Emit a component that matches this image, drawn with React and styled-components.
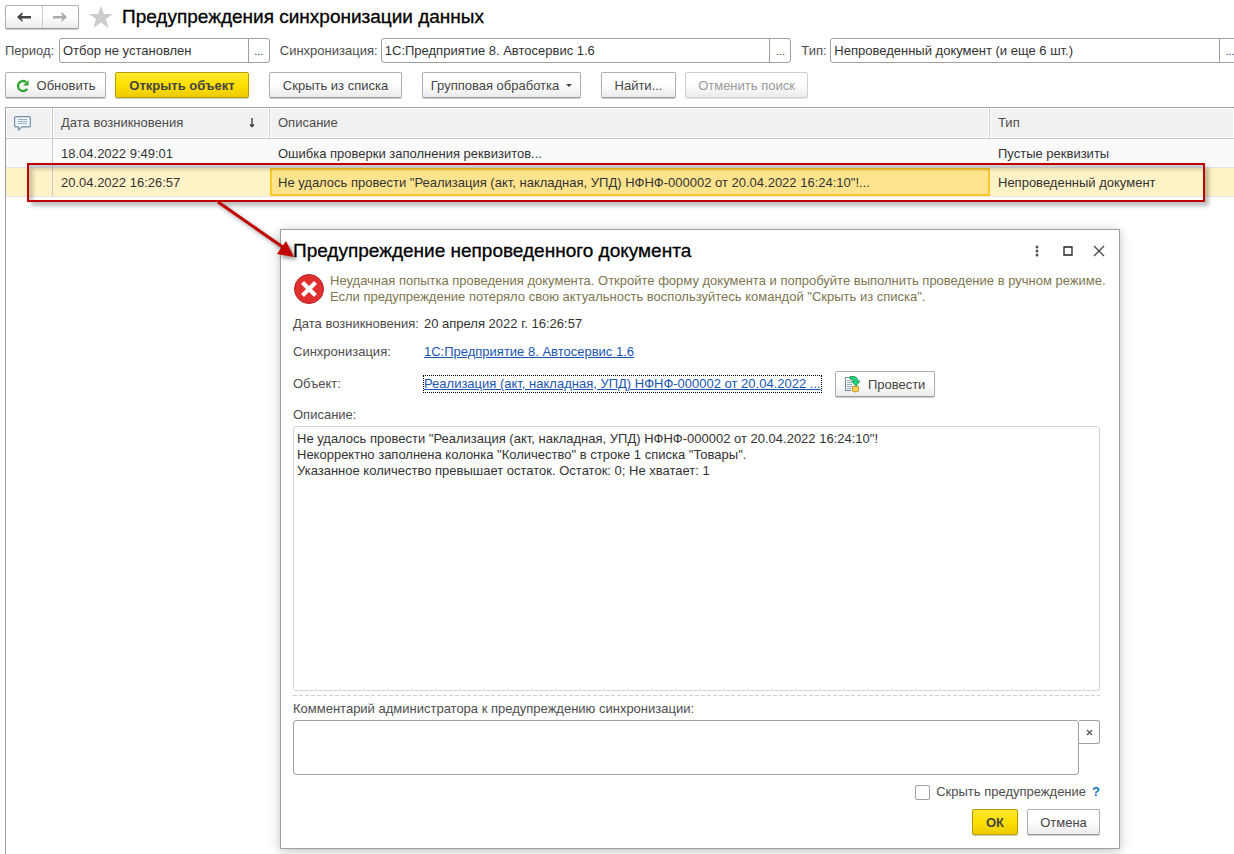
import React from 'react';
import styled, {createGlobalStyle, css} from 'styled-components';

const colors = {
	text: '#333333',
	label: '#4d4d4d',
	border: '#a0a0a0',
	line: '#cccccc',
	link: '#1a56b0',
	mark: '#c00000',
};

const GlobalStyle = createGlobalStyle`
	* {
		box-sizing: border-box;
	}

	html, body {
		height: 100%;
		margin: 0;
		overflow: hidden;
		background: #ffffff;
	}

	#root {
		height: 100%;
	}

	body, button, input, textarea {
		font-family: "Liberation Sans", Arial, sans-serif;
		font-size: 13px;
		line-height: 16px;
		color: ${colors.text};
	}
`;

const Page = styled.main`
	position: relative;
	display: flex;
	flex-direction: column;
	min-height: 100%;
	padding: 4px 0 0 5px;
	overflow: hidden;
`;

const TitleBar = styled.header`
	display: flex;
	align-items: center;
	height: 25px;
`;

const Title = styled.h1`
	margin: 0;
	font-size: 19px;
	line-height: 24px;
	font-weight: normal;
	color: #000000;
	-webkit-text-stroke: 0.3px #000000;
`;

const raised = css`
	border: 1px solid #b0b0b0;
	border-bottom-color: #989898;
	border-radius: 2px;
	background: linear-gradient(#ffffff 45%, #ebebeb);
	box-shadow: 0 1px 1px rgba(0, 0, 0, 0.2);
`;

const History = styled.nav`
	${raised}
	display: flex;
	width: 74px;
	height: 24px;
	margin-right: 10px;

	button {
		flex: 1;
		display: grid;
		place-items: center;
		padding: 0;
		border: 0;
		background: none;
	}

	button + button {
		border-left: 1px solid ${colors.line};
	}
`;

const Star = styled.svg`
	margin-right: 9px;
`;

const Filters = styled.div`
	display: grid;
	grid-template-columns: 265fr 512fr 440fr;
	gap: 10px;
	margin: 9px -7px 9px 0;
`;

const Filter = styled.div`
	display: grid;
	grid-template-columns: ${(props) => props.$label}px 1fr;
	align-items: center;

	label {
		color: ${colors.label};
		white-space: nowrap;
	}
`;

const Picker = styled.div`
	display: flex;
	height: 25px;
	border: 1px solid ${colors.border};
	border-radius: 3px;
	background: #ffffff;

	input {
		flex: 1;
		min-width: 0;
		padding: 0 3px;
		border: 0;
		background: none;
		outline: 0;
	}

	button {
		width: 21px;
		padding: 0;
		border: 0;
		border-left: 1px solid ${colors.border};
		background: none;
		font-size: 11px;
	}
`;

const Toolbar = styled.div`
	display: flex;
	gap: ${(props) => props.$gap}px;
`;

const Button = styled.button`
	${raised}
	display: flex;
	align-items: center;
	justify-content: center;
	gap: 7px;
	min-width: ${(props) => props.$width}px;
	height: 26px;
	padding: 1px 0 0;
	color: #444444;
	white-space: nowrap;

	&:disabled {
		border-color: #cfcfcf;
		color: #999999;
		box-shadow: 0 1px 1px rgba(0, 0, 0, 0.1);
	}

	${(props) => props.$primary && css`
		border-color: #b39b00;
		background: linear-gradient(#ffe633, #ffe000 50%, #eccb00);
		font-weight: bold;
	`}
`;

const List = styled.section`
	flex: 1;
	margin-top: 9px;
	border-left: 1px solid ${colors.border};
`;

const Table = styled.table`
	width: 100%;
	border-top: 1px solid ${colors.border};
	border-collapse: separate;
	border-spacing: 0;
	table-layout: fixed;

	th, td {
		height: 29px;
		padding: 2px 8px 0;
		border-bottom: 1px solid #e4e4e4;
		text-align: left;
		font-weight: normal;
		white-space: nowrap;
		overflow: hidden;
	}

	th {
		height: 31px;
		padding-top: 0;
		border-right: 1px solid ${colors.line};
		border-bottom-color: ${colors.line};
		background: #f1f1f1;
		box-shadow: inset 0 0 0 1px #ffffff;
		color: ${colors.label};
	}

	th:last-child {
		border-right: 0;
	}

	td:first-child {
		border-right: 1px solid ${colors.line};
	}

	svg {
		display: block;
	}
`;

const Row = styled.tr`
	td {
		background: ${(props) => props.$selected ? '#fff2c6' : '#fafafa'};
	}

	td:nth-child(3) {
		${(props) => props.$selected && css`
			background: #ffe48d;
			box-shadow: inset 0 0 0 2px #fac926;
		`}
	}
`;

const SortHead = styled.span`
	display: flex;
	align-items: center;
	justify-content: space-between;
	padding-right: 5px;
`;

const Highlight = styled.div`
	position: absolute;
	top: 163px;
	left: 27px;
	right: 29px;
	height: 39px;
	border: 2px solid ${colors.mark};
	box-shadow: 4px 4px 4px rgba(0, 0, 0, 0.25), inset 4px 4px 4px rgba(0, 0, 0, 0.2);
	pointer-events: none;
`;

const Pointer = styled.svg`
	position: absolute;
	top: 200px;
	left: 216px;
	filter: drop-shadow(3px 3px 2px rgba(0, 0, 0, 0.4));
	pointer-events: none;
`;

const Dialog = styled.section`
	position: absolute;
	top: 229px;
	left: 280px;
	right: 114px;
	padding: 8px 19px 13px 12px;
	border: 1px solid ${colors.border};
	background: #ffffff;
	box-shadow: 0 2px 10px rgba(0, 0, 0, 0.25);
`;

const DialogHead = styled.header`
	display: flex;
	align-items: center;
	justify-content: space-between;
	height: 26px;
`;

const WindowTools = styled.div`
	display: flex;
	gap: 15px;
	margin-right: -7px;

	button {
		display: grid;
		place-items: center;
		width: 16px;
		height: 16px;
		padding: 0;
		border: 0;
		background: none;
	}
`;

const Notice = styled.div`
	display: flex;
	gap: 5px;
	margin-top: 9px;
	color: #7d7650;
	white-space: nowrap;

	svg {
		flex: none;
	}

	p {
		margin: 0;
	}
`;

const Details = styled.dl`
	display: grid;
	grid-template-columns: 131px 1fr;
	grid-template-rows: 28px 28px 36px;
	align-items: center;
	margin: 5px 0 0;

	dt {
		color: ${colors.label};
		white-space: nowrap;
	}

	dd {
		display: flex;
		align-items: center;
		gap: 14px;
		margin: 0;
	}
`;

const Link = styled.a`
	color: ${colors.link};
	text-decoration: underline;
	outline: ${(props) => props.$focused ? '1px dotted #000000' : 'none'};
	white-space: nowrap;
`;

const FieldLabel = styled.label`
	display: block;
	margin: ${(props) => props.$top}px 0 3px;
	color: ${colors.label};
`;

const TextArea = styled.textarea`
	display: block;
	width: 100%;
	height: ${(props) => props.$height}px;
	padding: 4px 3px;
	border: 1px solid ${(props) => props.readOnly ? '#d4d4d4' : colors.border};
	border-radius: 3px;
	outline: 0;
	resize: none;
`;

const Divider = styled.hr`
	height: 1px;
	margin: 4px 0 0;
	border: 0;
	background: repeating-linear-gradient(to right, #d0d0d0 0 4px, transparent 4px 6px);
`;

const Comment = styled.div`
	display: flex;
	align-items: flex-start;

	button {
		flex: none;
		display: grid;
		place-items: center;
		width: 21px;
		height: 24px;
		padding: 0;
		border: 1px solid ${colors.border};
		border-left: 0;
		border-radius: 0 3px 3px 0;
		background: #ffffff;
	}
`;

const HideRow = styled.div`
	display: flex;
	align-items: center;
	justify-content: flex-end;
	gap: 6px;
	margin: 9px 0;

	input {
		appearance: none;
		width: 15px;
		height: 15px;
		margin: 0;
		border: 1px solid ${colors.border};
		border-radius: 2px;
		background: #ffffff;
	}

	label {
		color: ${colors.label};
	}

	a {
		color: #0a76c4;
		font-weight: bold;
		text-decoration: none;
	}
`;

const Actions = styled.footer`
	display: flex;
	justify-content: flex-end;
	gap: 9px;
`;

const Arrow = ({color, flip}) => (
	<svg width="16" height="12" viewBox="0 0 16 12">
		<path
			d="M1 6L6.500 1V3.500L5 5H15V7.400H5L6.500 8.800V11z"
			fill={color}
			transform={flip ? 'translate(16 0) scale(-1 1)' : undefined}
		/>
	</svg>
);

const RefreshIcon = () => (
	<svg width="14" height="14" viewBox="0 0 14 14">
		<path d="M11.200 9.800A5 5 0 1 1 10 3" fill="none" stroke="#2ca52c" strokeWidth="2.300" />
		<path d="M12.500 1V6.500H7z" fill="#2ca52c" />
	</svg>
);

const CommentIcon = () => (
	<svg width="17" height="15" viewBox="0 0 17 15">
		<path d="M1.500 0.600H15.500L16.400 1.500V10L15.500 10.900H8L4.500 14V10.900H1.500L0.600 10V1.500z" fill="#edf4fa" stroke="#7890a8" strokeWidth="1.200" />
		<path d="M4 3.500H13M4 5.500H13M4 7.500H13" stroke="#9aafc2" />
	</svg>
);

const ErrorIcon = () => (
	<svg width="32" height="32" viewBox="0 0 32 32">
		<circle cx="16" cy="16" r="14.500" fill="#df2f2f" stroke="#b52222" />
		<path d="M11 11L21 21M21 11L11 21" stroke="#ffffff" strokeWidth="4.200" strokeLinecap="square" />
	</svg>
);

const PostIcon = () => (
	<svg width="17" height="17" viewBox="0 0 17 17">
		<path d="M1 1.500H9M1.500 1V14M1 14.500H7" stroke="#7a8da0" />
		<path d="M3 4.500H7M3 6.500H8M3 8.500H8M3 10.500H8M3 12.500H7" stroke="#9aabba" />
		<path d="M6 0.500H9Q13.500 0.500 13.500 5H16L12 10L7.500 5H10Q10 3 6 3z" fill="#1fd67a" stroke="#0b8a48" strokeWidth="0.800" />
		<path d="M8.500 10.500V15Q11.500 17 14.500 15V10.500z" fill="#f0c030" stroke="#d09a20" />
		<path d="M9 12H14M9 14H14" stroke="#fbe38a" />
	</svg>
);

const filters = [
	{id: 'period', label: 'Период:', value: 'Отбор не установлен', width: 54},
	{id: 'sync', label: 'Синхронизация:', value: '1С:Предприятие 8. Автосервис 1.6', width: 101},
	{id: 'type', label: 'Тип:', value: 'Непроведенный документ (и еще 6 шт.)', width: 29},
];

const rows = [
	{date: '18.04.2022 9:49:01', text: 'Ошибка проверки заполнения реквизитов...', type: 'Пустые реквизиты'},
	{
		date: '20.04.2022 16:26:57',
		text: 'Не удалось провести "Реализация (акт, накладная, УПД) НФНФ-000002 от 20.04.2022 16:24:10"!...',
		type: 'Непроведенный документ',
		selected: true,
	},
];

const description = `Не удалось провести "Реализация (акт, накладная, УПД) НФНФ-000002 от 20.04.2022 16:24:10"!
Некорректно заполнена колонка "Количество" в строке 1 списка "Товары".
Указанное количество превышает остаток. Остаток: 0; Не хватает: 1`;

function WarningList() {
	return (
		<List>
			<Table>
				<colgroup>
					<col width="47" />
					<col width="217" />
					<col width="720" />
					<col />
				</colgroup>
				<thead>
					<tr>
						<th aria-label="Комментарий"><CommentIcon /></th>
						<th>
							<SortHead>
								Дата возникновения
								<svg width="8" height="12" viewBox="0 0 8 12">
									<path d="M4 1V9.500M2 7.500L4 9.500L6 7.500" fill="none" stroke="#333333" strokeWidth="1.300" />
								</svg>
							</SortHead>
						</th>
						<th>Описание</th>
						<th>Тип</th>
					</tr>
				</thead>
				<tbody>
					{rows.map((row) => (
						<Row key={row.date} $selected={row.selected}>
							<td />
							<td>{row.date}</td>
							<td>{row.text}</td>
							<td>{row.type}</td>
						</Row>
					))}
				</tbody>
			</Table>
		</List>
	);
}

function WarningDialog() {
	return (
		<Dialog role="dialog" aria-labelledby="dialog-title">
			<DialogHead>
				<Title as="h2" id="dialog-title">Предупреждение непроведенного документа</Title>
				<WindowTools>
					<button type="button" aria-label="Еще">
						<svg width="4" height="12" viewBox="0 0 4 12" fill="#555555">
							<circle cx="2" cy="2" r="1.500" />
							<circle cx="2" cy="6" r="1.500" />
							<circle cx="2" cy="10" r="1.500" />
						</svg>
					</button>
					<button type="button" aria-label="Развернуть">
						<svg width="10" height="10" viewBox="0 0 10 10">
							<path d="M1 1H9V9H1z" fill="none" stroke="#222222" strokeWidth="1.300" />
						</svg>
					</button>
					<button type="button" aria-label="Закрыть">
						<svg width="12" height="12" viewBox="0 0 12 12">
							<path d="M1 1L11 11M11 1L1 11" stroke="#444444" strokeWidth="1.300" />
						</svg>
					</button>
				</WindowTools>
			</DialogHead>
			<Notice>
				<ErrorIcon />
				<p>
					Неудачная попытка проведения документа. Откройте форму документа и попробуйте выполнить проведение в ручном режиме.
					<br />
					Если предупреждение потеряло свою актуальность воспользуйтесь командой "Скрыть из списка".
				</p>
			</Notice>
			<Details>
				<dt>Дата возникновения:</dt>
				<dd>20 апреля 2022 г. 16:26:57</dd>
				<dt>Синхронизация:</dt>
				<dd><Link href="#sync">1С:Предприятие 8. Автосервис 1.6</Link></dd>
				<dt>Объект:</dt>
				<dd>
					<Link href="#object" $focused>Реализация (акт, накладная, УПД) НФНФ-000002 от 20.04.2022 ...</Link>
					<Button type="button" $width={100}><PostIcon />Провести</Button>
				</dd>
			</Details>
			<FieldLabel htmlFor="description" $top={5}>Описание:</FieldLabel>
			<TextArea id="description" $height={265} defaultValue={description} readOnly />
			<Divider />
			<FieldLabel htmlFor="comment" $top={5}>Комментарий администратора к предупреждению синхронизации:</FieldLabel>
			<Comment>
				<TextArea id="comment" $height={55} />
				<button type="button" aria-label="Очистить">
					<svg width="7" height="7" viewBox="0 0 7 7">
						<path d="M1 1L6 6M6 1L1 6" stroke="#555555" strokeWidth="1.200" />
					</svg>
				</button>
			</Comment>
			<HideRow>
				<input type="checkbox" id="hide" />
				<label htmlFor="hide">Скрыть предупреждение</label>
				<a href="#help">?</a>
			</HideRow>
			<Actions>
				<Button type="button" $width={46} $primary>ОК</Button>
				<Button type="button" $width={73}>Отмена</Button>
			</Actions>
		</Dialog>
	);
}

function App() {
	return (
		<Page>
			<GlobalStyle />
			<TitleBar>
				<History>
					<button type="button" aria-label="Назад"><Arrow color="#444444" /></button>
					<button type="button" aria-label="Вперед"><Arrow color="#aaaaaa" flip /></button>
				</History>
				<Star width="24" height="22" viewBox="0 0 24 22">
					<path d="M12 0L15 8H24L17 13L19.500 22L12 16.500L4.500 22L7 13L0 8H9z" fill="#cccccc" />
				</Star>
				<Title>Предупреждения синхронизации данных</Title>
			</TitleBar>
			<Filters>
				{filters.map((filter) => (
					<Filter key={filter.id} $label={filter.width}>
						<label htmlFor={filter.id}>{filter.label}</label>
						<Picker>
							<input id={filter.id} defaultValue={filter.value} />
							<button type="button">...</button>
						</Picker>
					</Filter>
				))}
			</Filters>
			<Toolbar $gap={20}>
				<Toolbar $gap={9}>
					<Button type="button" $width={101}><RefreshIcon />Обновить</Button>
					<Button type="button" $width={134} $primary>Открыть объект</Button>
				</Toolbar>
				<Button type="button" $width={133}>Скрыть из списка</Button>
				<Button type="button" $width={159}>
					Групповая обработка
					<svg width="6" height="4" viewBox="0 0 6 4"><path d="M0 0H6L3 3z" fill="#444444" /></svg>
				</Button>
				<Toolbar $gap={9}>
					<Button type="button" $width={75}>Найти...</Button>
					<Button type="button" $width={123} disabled>Отменить поиск</Button>
				</Toolbar>
			</Toolbar>
			<WarningList />
			<Highlight />
			<WarningDialog />
			<Pointer width="84" height="64" viewBox="0 0 84 64">
				<path d="M2 2L68 48" stroke={colors.mark} strokeWidth="3" />
				<path d="M78 57L61 54L70 41z" fill={colors.mark} />
			</Pointer>
		</Page>
	);
}

export default App;
